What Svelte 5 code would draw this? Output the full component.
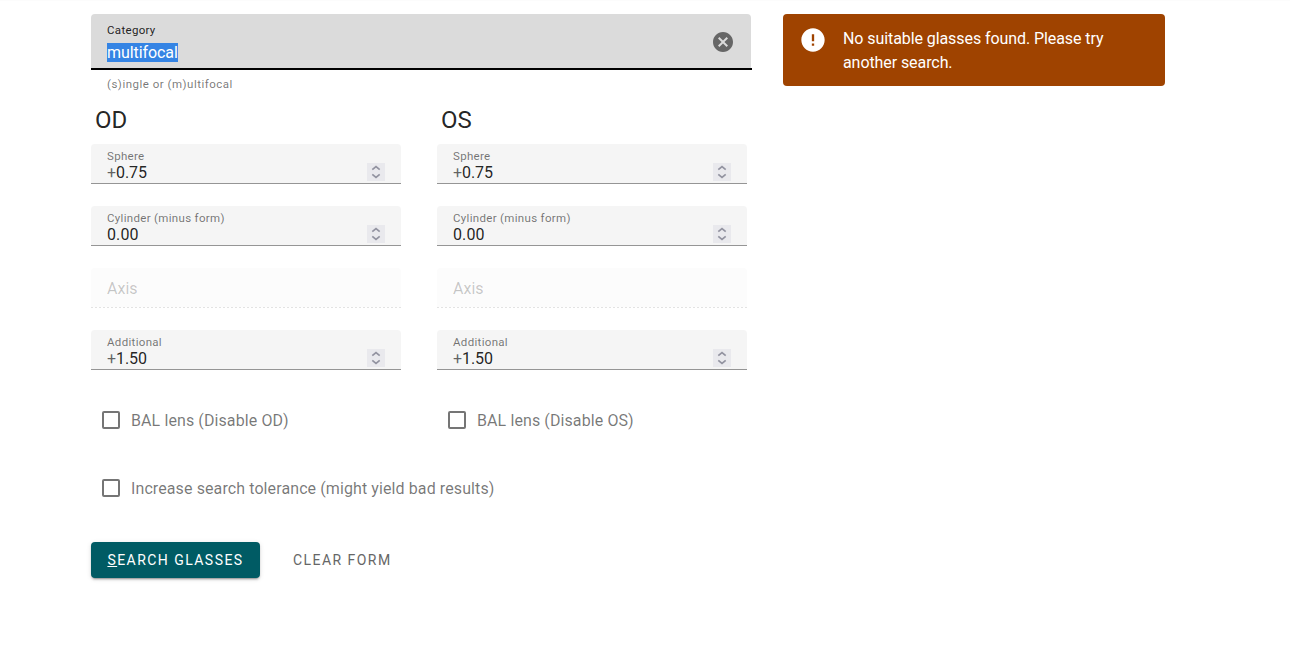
<script>
  const eyes = [
    { name: 'OD', sphere: '0.75', add: '1.50' },
    { name: 'OS', sphere: '0.75', add: '1.50' }
  ];
</script>

{#snippet number(label, sign, value)}
  <div class="field">
    <div class="label">{label}</div>
    <div class="value">
      <div class="amount" class:signed={sign}><span class="sign">{sign}</span>{value}</div>
      <span class="spin">
        <svg width="18" height="18" viewBox="0 0 18 18" fill="none" stroke="#9293a0" stroke-width="1.7">
          <path d="M5.3 6.7 9 3.7 12.7 6.7M5.3 11.3 9 14.3 12.7 11.3" />
        </svg>
      </span>
    </div>
  </div>
{/snippet}

<main>
  <form>
    <div class="category">
      <div class="cat-box">
        <div>
          <div class="label">Category</div>
          <div class="cat-value"><span>multifocal</span></div>
        </div>
        <svg class="clear" width="24" height="24" viewBox="0 0 24 24" fill="#666">
          <path d="M12 2C6.47 2 2 6.47 2 12s4.47 10 10 10 10-4.47 10-10S17.53 2 12 2zm5 13.59L15.59 17 12 13.41 8.41 17 7 15.59 10.59 12 7 8.41 8.41 7 12 10.59 15.59 7 17 8.41 13.41 12z" />
        </svg>
      </div>
    </div>
    <div class="hint">(s)ingle or (m)ultifocal</div>
    <div class="eyes">
      {#each eyes as eye}
        <section>
          <h2>{eye.name}</h2>
          {@render number('Sphere', '+', eye.sphere)}
          {@render number('Cylinder (minus form)', '', '0.00')}
          <div class="field disabled">Axis</div>
          {@render number('Additional', '+', eye.add)}
          <div class="check"><i></i><span>BAL lens (Disable {eye.name})</span></div>
        </section>
      {/each}
    </div>
    <div class="check tolerance"><i></i><span>Increase search tolerance (might yield bad results)</span></div>
    <div class="actions">
      <button type="button" class="primary"><u>S</u>earch glasses</button>
      <button type="button" class="plain">Clear form</button>
    </div>
  </form>
  <aside>
    <svg width="28" height="28" viewBox="0 0 24 24" fill="#fff">
      <path d="M12 2C6.48 2 2 6.48 2 12s4.48 10 10 10 10-4.48 10-10S17.52 2 12 2zm1 15h-2v-2h2v2zm0-4h-2V7h2v6z" />
    </svg>
    <p>No suitable glasses found. Please try another search.</p>
  </aside>
</main>

<style>
  :global(body) { background: #fff; }
  main {
    box-sizing: border-box;
    height: 660px;
    padding: 14px 125px 0 91px;
    display: flex;
    align-items: flex-start;
    gap: 31px;
    font: 16px/24px Roboto, sans-serif;
    color: rgba(0, 0, 0, .87);
    box-shadow: inset 0 1px 0 #fcfcfc;
  }
  form { width: 661px; }
  .category {
    box-sizing: border-box;
    height: 56px;
    border-bottom: 2px solid #000;
  }
  .cat-box {
    box-sizing: border-box;
    width: 660px;
    height: 54px;
    display: flex;
    justify-content: space-between;
    padding: 6px 16px 0;
    background: #dbdbdb;
    border-radius: 4px 4px 0 0;
  }
  .label { font-size: 11.5px; line-height: 20px; letter-spacing: .32px; white-space: nowrap; }
  .cat-value { padding-top: 1px; line-height: 24px; letter-spacing: -.08px; }
  .cat-value span { color: #fff; background: #3584e4; }
  .clear { margin-top: 10px; }
  .hint { margin: 8px 0 0 16px; height: 12px; font-size: 11.5px; line-height: 12px; letter-spacing: .5px; color: rgba(0, 0, 0, .54); }
  .eyes { display: flex; gap: 36px; padding-top: 14px; }
  section { width: 310px; }
  h2 { margin: 0 0 8px 4px; font-size: 24px; line-height: 32px; font-weight: 400; }
  .field {
    box-sizing: border-box;
    height: 40px;
    margin-bottom: 22px;
    padding: 2px 16px 0;
    background: #f5f5f5;
    border-bottom: 1px solid #959595;
    border-radius: 4px 4px 0 0;
  }
  .field .label { color: rgba(0, 0, 0, .54); }
  .value { display: flex; align-items: center; height: 12px; }
  .amount { padding-top: 2px; letter-spacing: .1px; }
  .signed { letter-spacing: -.1px; }
  .sign { color: rgba(0, 0, 0, .6); }
  .spin { width: 18px; height: 18px; margin-left: auto; background: #e9e9ed; }
  .spin svg { display: block; }
  .disabled {
    padding-top: 9px;
    color: rgba(0, 0, 0, .22);
    background: #fcfcfc;
    border-bottom: 0;
    background-image: repeating-linear-gradient(90deg, #e3e3e3 0 2px, #fff 2px 4px);
    background-size: 100% 1px;
    background-position: bottom;
    background-repeat: no-repeat;
  }
  .check { display: flex; align-items: center; height: 24px; padding-left: 11px; color: rgba(0, 0, 0, .54); letter-spacing: .1px; }
  .check span { padding-top: 2px; }
  section .check { margin-top: 38px; }
  .check i { box-sizing: border-box; width: 18px; height: 18px; margin-right: 11px; border: 2px solid #757575; border-radius: 2px; }
  .tolerance { margin-top: 44px; }
  .actions { display: flex; gap: 17px; margin-top: 42px; }
  button {
    height: 36px;
    padding: 0 16px;
    border: 0;
    border-radius: 4px;
    background: none;
    font: 400 14px/36px Roboto, sans-serif;
    letter-spacing: 1.45px;
    text-transform: uppercase;
    white-space: nowrap;
    color: #666;
  }
  .primary {
    width: 169px;
    background: #005b64;
    color: #fff;
    box-shadow: 0 3px 1px -2px rgba(0, 0, 0, .2), 0 2px 2px rgba(0, 0, 0, .14), 0 1px 5px rgba(0, 0, 0, .12);
  }
  u { text-underline-offset: 1px; }
  aside {
    box-sizing: border-box;
    width: 382px;
    height: 72px;
    display: flex;
    gap: 16px;
    padding: 12px 16px;
    background: #9f4300;
    border-radius: 4px;
    color: #fff;
  }
  aside svg { flex: none; }
  p { margin: 1px 0 0; letter-spacing: -.08px; }
</style>
